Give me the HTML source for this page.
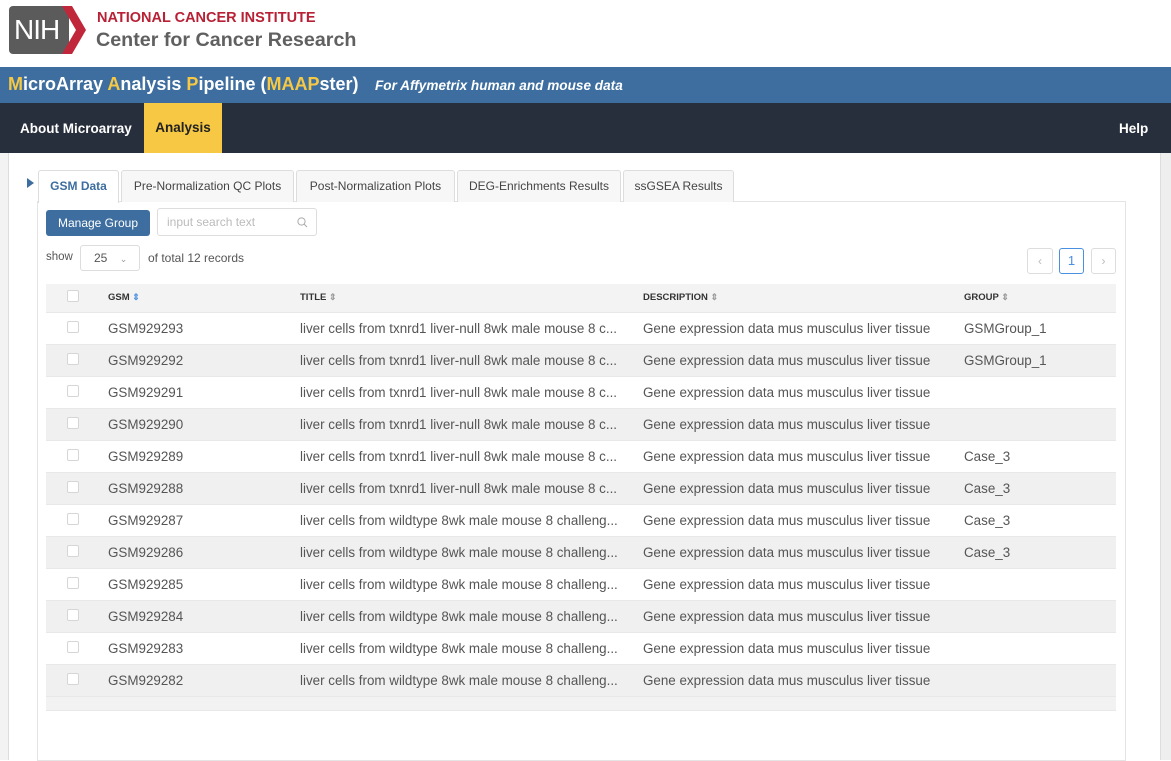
<!DOCTYPE html>
<html><head><meta charset="utf-8"><style>
*{box-sizing:border-box;margin:0;padding:0}
body{width:1171px;height:760px;overflow:hidden;background:#fff;font-family:"Liberation Sans",Helvetica,Arial,sans-serif;position:relative}
.abs{position:absolute}
.nih{left:9px;top:6px;width:60px;height:48px;background:#5b5b5b;border-radius:4px;color:#fff;font-size:28px;line-height:48px;padding-left:5px;letter-spacing:-1px}
.chev{left:62px;top:6px}
.banner{left:0;top:67px;width:1171px;height:36px;background:#3d6e9f;color:#fff}
.nav{left:0;top:103px;width:1171px;height:50px;background:#282f3c;color:#fff;font-weight:bold;font-size:13.5px}
.y{color:#f6c844}
.wrap{left:8px;top:153px;width:1153px;height:607px;border-left:1px solid #ddd;border-right:1px solid #ddd;background:#fff}
.side{left:0;top:153px;width:8px;height:607px;background:#f3f3f3}
.side2{left:1161px;top:153px;width:10px;height:607px;background:#eee}
.tab{top:170px;height:32px;border:1px solid #ddd;border-bottom:none;background:#f7f7f7;font-size:12px;color:#444;line-height:31px;text-align:center;border-radius:3px 3px 0 0}
.box{left:37px;top:201px;width:1089px;height:560px;border:1px solid #e4e4e4}
table{position:absolute;left:46px;top:284px;width:1070px;border-collapse:collapse;font-size:13.4px;color:#555;table-layout:fixed}
td{height:32px;border-bottom:1px solid #e8e8e8;white-space:nowrap;overflow:hidden}
tr.h td{height:28px;font-size:9.5px;font-weight:bold;color:#333}
tr:nth-child(odd) td{background:#f0f0f0}
tr.h td{background:#f3f3f3}
.cb{display:inline-block;width:12px;height:12px;border:1px solid #d6d6d6;background:#fff;border-radius:2px;margin-left:21px}
.s{color:#999;font-size:9px}
</style></head><body>
<div class="abs nih">NIH</div>
<svg class="abs chev" width="26" height="48"><path d="M0 0 L10 0 L24 24 L10 48 L0 48 L14 24Z" fill="#c1273b"/></svg>
<div class="abs" style="left:97px;top:10px;color:#b82135;font-weight:bold;font-size:14.5px">NATIONAL CANCER INSTITUTE</div>
<div class="abs" style="left:96px;top:29px;color:#606060;font-weight:bold;font-size:19.7px">Center for Cancer Research</div>
<div class="abs banner"><span class="abs" style="left:8px;top:7px;font-size:18px;font-weight:bold"><span class="y">M</span>icroArray <span class="y">A</span>nalysis <span class="y">P</span>ipeline (<span class="y">MAAP</span>ster)</span><span class="abs" style="left:375px;top:11px;font-size:13.6px;font-weight:bold;font-style:italic">For Affymetrix human and mouse data</span></div>
<div class="abs nav"><span class="abs" style="left:20px;top:18px">About Microarray</span><div class="abs" style="left:144px;top:0;width:78px;height:50px;background:#f6c844;color:#222;text-align:center;line-height:50px">Analysis</div><span class="abs" style="left:1119px;top:18px">Help</span></div>
<div class="abs side"></div><div class="abs side2"></div>
<div class="abs wrap"></div>
<div class="abs box"></div>
<svg class="abs" style="left:27px;top:178px" width="8" height="10"><path d="M0 0L7 5L0 10Z" fill="#3d6e9f"/></svg>
<div class="abs tab" style="left:38px;width:81px;background:#fff;color:#3d6e9f;font-weight:bold;height:33px">GSM Data</div>
<div class="abs tab" style="left:121px;width:173px">Pre-Normalization QC Plots</div>
<div class="abs tab" style="left:296px;width:159px">Post-Normalization Plots</div>
<div class="abs tab" style="left:457px;width:164px">DEG-Enrichments Results</div>
<div class="abs tab" style="left:623px;width:111px">ssGSEA Results</div>
<div class="abs" style="left:46px;top:210px;width:104px;height:26px;background:#3d6e9f;color:#fff;border-radius:3px;font-size:12px;text-align:center;line-height:26px">Manage Group</div>
<div class="abs" style="left:157px;top:208px;width:160px;height:28px;border:1px solid #ddd;border-radius:3px;color:#bbb;font-size:12px;line-height:27px;padding-left:9px">input search text<svg class="abs" style="left:139px;top:8px" width="11" height="11"><circle cx="4.5" cy="4.5" r="3.6" stroke="#aaa" fill="none"/><path d="M7 7L10 10" stroke="#aaa"/></svg></div>
<div class="abs" style="left:46px;top:251px;font-size:11.5px;color:#555">show</div>
<div class="abs" style="left:80px;top:245px;width:60px;height:26px;border:1px solid #ddd;border-radius:3px;font-size:12px;color:#555;line-height:25px;padding-left:13px">25 <span style="color:#999;font-size:9px;margin-left:9px">&#8964;</span></div>
<div class="abs" style="left:148px;top:251px;font-size:12px;color:#555">of total 12 records</div>
<div class="abs" style="left:1027px;top:248px;width:26px;height:26px;border:1px solid #ddd;border-radius:3px;color:#bbb;text-align:center;line-height:24px;font-size:12px">&lsaquo;</div>
<div class="abs" style="left:1059px;top:248px;width:25px;height:26px;border:1px solid #4a90e2;border-radius:3px;color:#4a90e2;text-align:center;line-height:24px;font-size:13px">1</div>
<div class="abs" style="left:1091px;top:248px;width:25px;height:26px;border:1px solid #ddd;border-radius:3px;color:#bbb;text-align:center;line-height:24px;font-size:12px">&rsaquo;</div>
<table>
<colgroup><col style="width:54px"><col style="width:200px"><col style="width:343px"><col style="width:321px"><col></colgroup>
<tr class="h"><td><span class="cb"></span></td><td style="padding-left:8px">GSM <span class="s" style="color:#4a90e2">&#8661;</span></td><td>TITLE <span class="s">&#8661;</span></td><td>DESCRIPTION <span class="s">&#8661;</span></td><td>GROUP <span class="s">&#8661;</span></td></tr>
<tr><td><span class="cb"></span></td><td style="padding-left:8px">GSM929293</td><td>liver cells from txnrd1 liver-null 8wk male mouse 8 c...</td><td>Gene expression data mus musculus liver tissue</td><td>GSMGroup_1</td></tr>
<tr><td><span class="cb"></span></td><td style="padding-left:8px">GSM929292</td><td>liver cells from txnrd1 liver-null 8wk male mouse 8 c...</td><td>Gene expression data mus musculus liver tissue</td><td>GSMGroup_1</td></tr>
<tr><td><span class="cb"></span></td><td style="padding-left:8px">GSM929291</td><td>liver cells from txnrd1 liver-null 8wk male mouse 8 c...</td><td>Gene expression data mus musculus liver tissue</td><td></td></tr>
<tr><td><span class="cb"></span></td><td style="padding-left:8px">GSM929290</td><td>liver cells from txnrd1 liver-null 8wk male mouse 8 c...</td><td>Gene expression data mus musculus liver tissue</td><td></td></tr>
<tr><td><span class="cb"></span></td><td style="padding-left:8px">GSM929289</td><td>liver cells from txnrd1 liver-null 8wk male mouse 8 c...</td><td>Gene expression data mus musculus liver tissue</td><td>Case_3</td></tr>
<tr><td><span class="cb"></span></td><td style="padding-left:8px">GSM929288</td><td>liver cells from txnrd1 liver-null 8wk male mouse 8 c...</td><td>Gene expression data mus musculus liver tissue</td><td>Case_3</td></tr>
<tr><td><span class="cb"></span></td><td style="padding-left:8px">GSM929287</td><td>liver cells from wildtype 8wk male mouse 8 challeng...</td><td>Gene expression data mus musculus liver tissue</td><td>Case_3</td></tr>
<tr><td><span class="cb"></span></td><td style="padding-left:8px">GSM929286</td><td>liver cells from wildtype 8wk male mouse 8 challeng...</td><td>Gene expression data mus musculus liver tissue</td><td>Case_3</td></tr>
<tr><td><span class="cb"></span></td><td style="padding-left:8px">GSM929285</td><td>liver cells from wildtype 8wk male mouse 8 challeng...</td><td>Gene expression data mus musculus liver tissue</td><td></td></tr>
<tr><td><span class="cb"></span></td><td style="padding-left:8px">GSM929284</td><td>liver cells from wildtype 8wk male mouse 8 challeng...</td><td>Gene expression data mus musculus liver tissue</td><td></td></tr>
<tr><td><span class="cb"></span></td><td style="padding-left:8px">GSM929283</td><td>liver cells from wildtype 8wk male mouse 8 challeng...</td><td>Gene expression data mus musculus liver tissue</td><td></td></tr>
<tr><td><span class="cb"></span></td><td style="padding-left:8px">GSM929282</td><td>liver cells from wildtype 8wk male mouse 8 challeng...</td><td>Gene expression data mus musculus liver tissue</td><td></td></tr>
</table>
<div class="abs" style="left:46px;top:697px;width:1070px;height:14px;background:#f2f2f2;border-bottom:1px solid #e8e8e8"></div>
</body></html>
